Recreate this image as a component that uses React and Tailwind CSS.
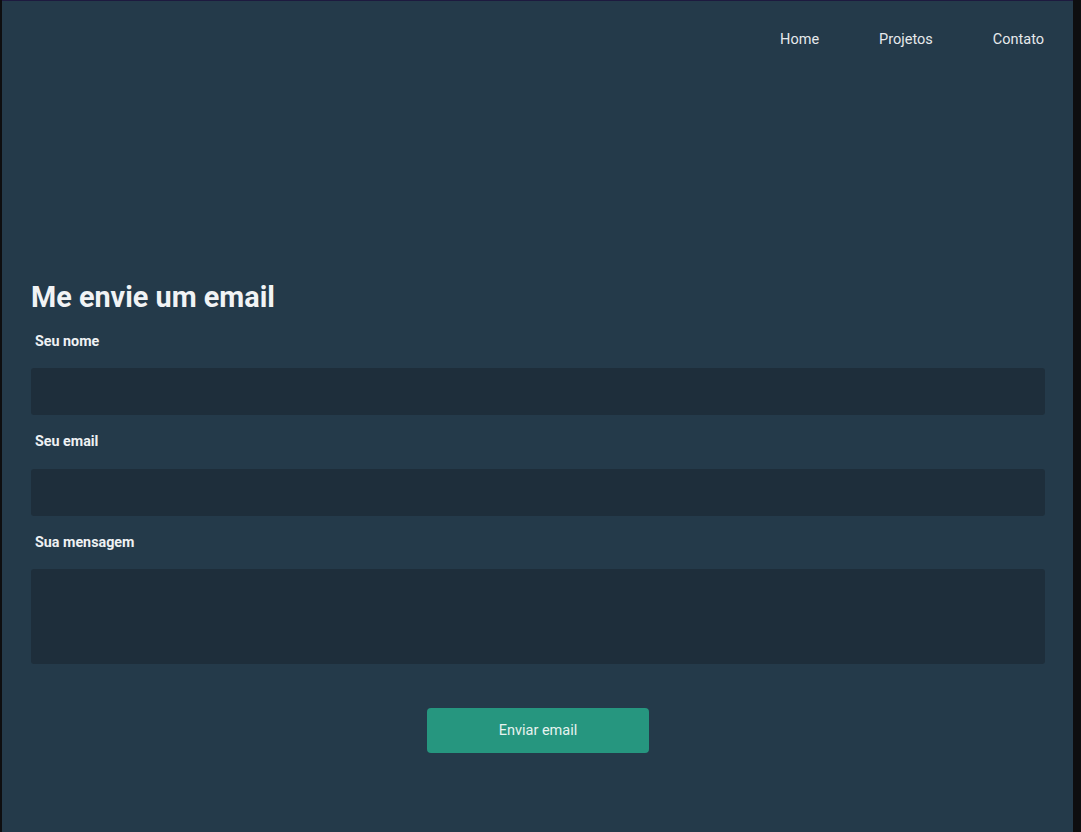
export default function App() {
  return (
    <div className="min-h-[832px] w-[1081px] bg-[#0e0e10] font-['Roboto',sans-serif]">
      <div className="ml-[2px] mr-[8px] min-h-[832px] border-t border-[#1d1a3f] bg-[#243a4a] text-[#eef1f3]">
        <nav className="flex justify-end gap-[60px] pr-[29px] pt-[30px] text-[14.5px] leading-[18px] text-[#e6e9ec]">
          <a className="cursor-pointer">Home</a>
          <a className="cursor-pointer">Projetos</a>
          <a className="cursor-pointer">Contato</a>
        </nav>

        <section className="pl-[29px] pr-[28px] pt-[230px] pb-[80px]">
          <h1 className="text-[28.8px] font-bold leading-[36px] text-[#f1f3f5]">Me envie um email</h1>

          <form className="mt-[17px] flex flex-col" onSubmit={(e) => e.preventDefault()}>
            <label className="pl-[4px] text-[14.3px] font-bold leading-[18px]">Seu nome</label>
            <input type="text" className="mt-[18px] h-[47px] w-full rounded-[3px] bg-[#1e2e3b] px-3 outline-none" />

            <label className="mt-[17px] pl-[4px] text-[14.3px] font-bold leading-[18px]">Seu email</label>
            <input type="email" className="mt-[19px] h-[47px] w-full rounded-[3px] bg-[#1e2e3b] px-3 outline-none" />

            <label className="mt-[17px] pl-[4px] text-[14.3px] font-bold leading-[18px]">Sua mensagem</label>
            <textarea className="mt-[18px] h-[95px] w-full resize-none rounded-[3px] bg-[#1e2e3b] px-3 py-2 outline-none" />

            <div className="mt-[44px] flex justify-center">
              <button className="h-[45px] w-[222px] rounded-[4px] bg-[#26967f] text-[14.5px] text-[#e8f3f0]">
                Enviar email
              </button>
            </div>
          </form>
        </section>
      </div>
    </div>
  );
}
